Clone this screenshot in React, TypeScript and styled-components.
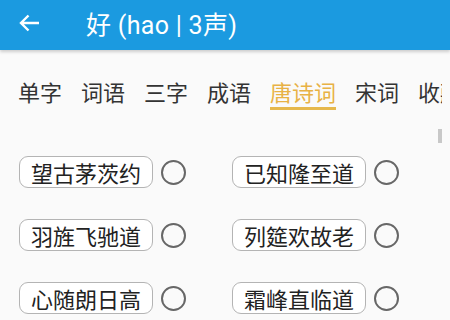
import React from 'react';
import styled, { createGlobalStyle } from 'styled-components';

const GlobalStyle = createGlobalStyle`
  html, body {
    margin: 0;
    padding: 0;
    background: #fafafa;
  }
  body {
    font-family: Roboto, "Noto Sans CJK SC", sans-serif;
    width: 450px;
    height: 320px;
    overflow: hidden;
  }
`;

const Page = styled.div`
  width: 450px;
  height: 320px;
  overflow: hidden;
  background: #fafafa;
  position: relative;
`;

const AppBar = styled.header`
  height: 50px;
  background: #1b9ae0;
  display: flex;
  align-items: center;
  padding-left: 19px;
  box-shadow: 0 2px 3px rgba(0, 0, 0, 0.18);
  position: relative;
  z-index: 2;
`;

const BackButton = styled.div`
  width: 21px;
  height: 18px;
  display: flex;
  align-items: center;
  margin-right: 46px;
  margin-top: -4px;
`;

const Title = styled.h1`
  margin: 0;
  margin-top: -4px;
  font-size: 25px;
  font-weight: 400;
  color: #fff;
  letter-spacing: 0.3px;
`;

const TabStrip = styled.nav`
  display: flex;
  gap: 19px;
  width: 424px;
  padding-left: 18px;
  margin-top: 25px;
  overflow: hidden;
  white-space: nowrap;
`;

const Tab = styled.div<{ $active?: boolean }>`
  flex-shrink: 0;
  font-family: "Noto Sans CJK SC", sans-serif;
  font-size: 22px;
  line-height: 32px;
  color: ${(p) => (p.$active ? '#e8b245' : '#333')};
  border-bottom: 3px solid ${(p) => (p.$active ? '#e6b84c' : 'transparent')};
`;

const Scrollbar = styled.div`
  position: absolute;
  right: 8px;
  top: 129px;
  width: 4px;
  height: 14px;
  background: #c8c8c8;
`;

const Grid = styled.div`
  display: grid;
  grid-template-columns: 213px 1fr;
  row-gap: 31px;
  padding: 0 0 0 19px;
  margin-top: 46px;
`;

const Entry = styled.div`
  display: flex;
  align-items: center;
  gap: 8px;
`;

const Chip = styled.div`
  height: 32px;
  box-sizing: border-box;
  display: flex;
  align-items: center;
  padding: 0 11px;
  border: 1px solid #b4b4b4;
  border-radius: 9px;
  background: #fff;
  font-family: "Noto Sans CJK SC", sans-serif;
  font-size: 22px;
  color: #222;
`;

const Radio = styled.div`
  width: 25px;
  height: 25px;
  box-sizing: border-box;
  border: 2px solid #676767;
  border-radius: 50%;
`;

const tabs = ['单字', '词语', '三字', '成语', '唐诗词', '宋词', '收藏'];

const poems = ['望古茅茨约', '已知隆至道', '羽旌飞驰道', '列筵欢故老', '心随朗日高', '霜峰直临道'];

const App: React.FC = () => (
  <Page>
    <GlobalStyle />
    <AppBar>
      <BackButton>
        <svg width="21" height="18" viewBox="0 0 21 18" fill="none">
          <path d="M20 9H2.5M9.5 1.5L2 9l7.5 7.5" stroke="#fff" strokeWidth="2.4" />
        </svg>
      </BackButton>
      <Title>好 (hao | 3声)</Title>
    </AppBar>
    <TabStrip>
      {tabs.map((t) => (
        <Tab key={t} $active={t === '唐诗词'}>
          {t}
        </Tab>
      ))}
    </TabStrip>
    <Scrollbar />
    <Grid>
      {poems.map((p) => (
        <Entry key={p}>
          <Chip>{p}</Chip>
          <Radio />
        </Entry>
      ))}
    </Grid>
  </Page>
);

export default App;
